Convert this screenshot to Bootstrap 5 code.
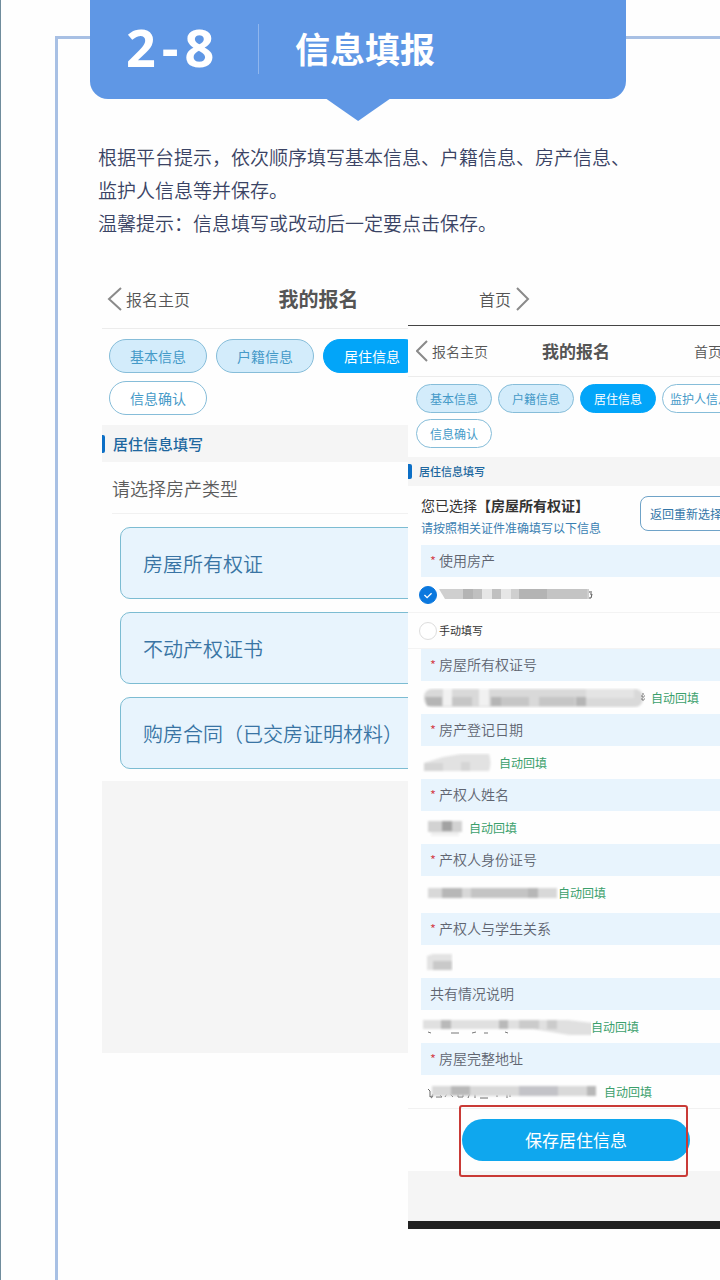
<!DOCTYPE html>
<html lang="zh-CN">
<head>
<meta charset="utf-8">
<meta name="viewport" content="width=device-width, initial-scale=1">
<title>2-8 信息填报</title>
<link href="https://cdn.jsdelivr.net/npm/bootstrap@5.3.0/dist/css/bootstrap.min.css" rel="stylesheet">
<style>
  body { font-family: "Noto Sans CJK SC", sans-serif; background: #fefefe; color: #555; }
  a { color: inherit; text-decoration: none; }
  .sheet { min-height: 100vh; padding: 36px 0 0 54px; border-left: 1px solid #6f8c9c; }
  .frame { min-height: calc(100vh - 36px); border: solid #a8c0e4; border-width: 3px 0 0 3px; }

  .banner { width: 81%; height: 99px; margin: -39px 0 0 32px; background: #5f97e5; color: #fff; border-radius: 0 0 18px 18px; }
  .banner::after { content: ""; position: absolute; top: 98px; left: 50%; width: 66px; height: 23px; margin-left: -33px; background: inherit; clip-path: polygon(0 0, 100% 0, 50% 100%); }
  .banner-no { gap: 6px; width: 168px; padding-left: 36px; font: bold 52px/94px "Open Sans", sans-serif; }
  .banner-rule { width: 1px; height: 50px; margin-top: 24px; background: #8fb6ee; }
  .banner-title { margin: 0 0 0 36px; font-size: 35px; font-weight: 700; line-height: 96px; }

  .intro { margin: 41px 0 31px 40px; font-size: 19px; line-height: 33px; color: #3a4364; font-weight: 350; }

  .shots { grid-template-columns: 1fr; margin-left: 44px; }
  .shots > * { grid-area: 1 / 1; }
  .phone { background: #fefefe; }
  .phone-a { width: 443px; }
  .phone-b { width: 336px; margin: 55px 0 0 306px; border-top: 1px solid #444; z-index: 1; }

  .topbar { grid-template-columns: 1fr auto 1fr; border-bottom: 1px solid #ececec; font-weight: 350; }
  .topbar svg { fill: none; stroke: #8a8a8a; stroke-width: 2; }
  .topbar h2 { margin: 0; font-weight: 700; color: #555; }
  .phone-a .topbar { height: 59px; padding: 0 15px 0 5px; font-size: 16px; }
  .phone-a .topbar h2 { font-size: 20px; }
  .phone-b .topbar { height: 51px; padding: 0 8px; font-size: 14px; }
  .phone-b .topbar h2 { font-size: 17px; }

  .step { padding: 0; border: 1px solid #86bdd9; border-radius: 50rem; color: #459ac8; background: #fff; white-space: nowrap; }
  .step-done { background: #d3ecfb; }
  .step-on, .step-on:hover { background: #02a5f9; border-color: #02a5f9; color: #fff; }
  .phone-a .steps { gap: 8px 9px; padding: 10px 40px 10px 7px; }
  .phone-a .step { width: 98px; height: 34px; font-size: 14px; line-height: 30px; }
  .phone-b .steps { gap: 6px; padding: 7px 0 9px 8px; }
  .phone-b .step { width: 76px; height: 29px; font-size: 12px; line-height: 25px; }

  .section-bar { background: #f5f5f5; color: #20679f; font-weight: 500; margin: 0; }
  .section-bar::before { content: ""; background: #0c6fc6; border-radius: 0 2px 2px 0; }
  .phone-a .section-bar { height: 37px; gap: 8px; font-size: 15px; }
  .phone-a .section-bar::before { width: 3px; height: 18px; }
  .phone-b .section-bar { height: 29px; gap: 7px; font-size: 11px; }
  .phone-b .section-bar::before { width: 4px; height: 15px; }

  .ask { margin: 0 0 0 10px; height: 52px; font-size: 18px; line-height: 52px; color: #5c5c5c; border-bottom: 1px solid #f1f1f1; font-weight: 350; }
  .options { gap: 13px; padding: 13px 0 12px 18px; }
  .option { height: 72px; padding: 2px 22px 0; border: 1px solid #7cbcd2; border-radius: 10px; background: #e8f4fd; color: #3974a4; font-size: 20px; font-weight: 350; text-align: left; }
  .blank { height: 272px; background: #f5f5f5; }

  .chosen { height: 59px; padding: 8px 12px 0 13px; color: #333; }
  .chosen p { margin: 0; font-size: 14px; line-height: 22px; }
  .chosen small { display: block; font-size: 12px; line-height: 24px; color: #3a7fb2; }
  .rechoose { width: 92px; height: 35px; margin-top: 2px; padding: 0; border: 1px solid #6fa3c8; border-radius: 8px; background: #fff; color: #3376a8; font-size: 12px; }
  .field-label { height: 32px; margin: 0 0 0 13px; padding-left: 9px; background: #e8f4fd; color: #5f6470; font-size: 14px; line-height: 31px; font-weight: 350; }
  .req { width: 9px; color: #d23b45; font-size: 13px; }
  .field-value { height: 33px; padding-left: 13px; color: #3ba06c; font-size: 12px; }
  .pick { height: 36px; padding-left: 11px; border-bottom: 1px solid #f3f3f3; font-size: 11px; color: #333; }
  .pick .form-check-input { width: 18px; height: 18px; margin: 0 2px 0 0; border-color: #ddd; flex: none; }
  .pick .form-check-input:checked { border-color: #0b78de; background-color: #0b78de; background-image: url("data:image/svg+xml,%3Csvg xmlns='http://www.w3.org/2000/svg' viewBox='0 0 18 18'%3E%3Cpath d='M5 9l3 3 5-5' fill='none' stroke='%23fff' stroke-width='1.5'/%3E%3C/svg%3E"); }
  .soft { filter: blur(1px); }

  .save-area { padding: 10px 54px; border-top: 1px solid #f1f1f1; }
  .save-btn { height: 42px; padding: 0; border: 0; border-radius: 50rem; background: #0fa7ee; color: #fff; font-size: 17px; }
  .highlight { inset: -14px 2px -16px -3px; border: 2px solid #c93a36; border-radius: 3px; pointer-events: none; }
  .foot { height: 58px; background: #f5f5f5; border-bottom: 8px solid #222; }
</style>
</head>
<body>
<div class="sheet overflow-hidden">
  <main class="frame">
    <header class="banner position-relative d-flex">
      <div class="banner-no d-flex"><span>2</span><span>-</span><span>8</span></div>
      <div class="banner-rule"></div>
      <h1 class="banner-title text-nowrap">信息填报</h1>
    </header>

    <p class="intro">根据平台提示，依次顺序填写基本信息、户籍信息、房产信息、<br>监护人信息等并保存。<br>温馨提示：信息填写或改动后一定要点击保存。</p>

    <div class="shots d-grid align-items-start">
      <section class="phone phone-a">
        <nav class="topbar d-grid align-items-center">
          <a href="#" class="d-flex align-items-center gap-1"><svg width="15" height="26"><path d="M14 2L2 13l12 11"/></svg>报名主页</a>
          <h2>我的报名</h2>
          <a href="#" class="d-flex align-items-center justify-content-end gap-1"><span>首页</span><svg width="15" height="26"><path d="M2 2l11 11L2 24"/></svg></a>
        </nav>
        <div class="steps d-flex flex-wrap">
          <button class="btn step step-done">基本信息</button>
          <button class="btn step step-done">户籍信息</button>
          <button class="btn step step-on">居住信息</button>
          <button class="btn step">信息确认</button>
        </div>
        <h3 class="section-bar d-flex align-items-center">居住信息填写</h3>
        <p class="ask">请选择房产类型</p>
        <div class="options d-grid">
          <button class="option">房屋所有权证</button>
          <button class="option">不动产权证书</button>
          <button class="option">购房合同（已交房证明材料）</button>
        </div>
        <div class="blank"></div>
      </section>

      <section class="phone phone-b">
        <nav class="topbar d-grid align-items-center">
          <a href="#" class="d-flex align-items-center gap-1"><svg width="12" height="22"><path d="M11 1L1 11l10 10"/></svg>报名主页</a>
          <h2>我的报名</h2>
          <a href="#" class="d-flex align-items-center justify-content-end gap-1"><span>首页</span><svg width="10" height="22"><path d="M1 1l9 10-9 10"/></svg></a>
        </nav>
        <div class="steps d-flex flex-wrap">
          <button class="btn step step-done">基本信息</button>
          <button class="btn step step-done">户籍信息</button>
          <button class="btn step step-on">居住信息</button>
          <button class="btn step">监护人信息</button>
          <button class="btn step">信息确认</button>
        </div>
        <h3 class="section-bar d-flex align-items-center">居住信息填写</h3>
        <div class="chosen d-flex justify-content-between align-items-start">
          <div><p>您已选择<b>【房屋所有权证】</b></p><small>请按照相关证件准确填写以下信息</small></div>
          <button class="rechoose">返回重新选择</button>
        </div>

        <div class="field-label d-flex"><span class="req">*</span>使用房产</div>
        <div class="pick d-flex align-items-center">
          <input class="form-check-input" type="radio" name="house" id="house-known" checked>
          <label for="house-known" class="d-flex" aria-label="已登记房产">
            <svg width="156" height="14"><path d="M0 1h150v10H6z" fill="#cfcfcf"/><path d="M24 1h10v10H24zM80 1h28v10H80z" fill="#b4b4b4"/><path d="M34 1h9v10h-9zM53 1h9v10h-9z" fill="#c0c0c0"/><path d="M43 1h10v10H43zM62 1h10v10H62z" fill="#e6e6e6"/><path d="M108 1h40v10h-40z" fill="#c4c4c4"/><path d="M150 4h3m-2 2h2l-1 4h-2" fill="none" stroke="#555"/></svg>
          </label>
        </div>
        <div class="pick d-flex align-items-center">
          <input class="form-check-input" type="radio" name="house" id="house-manual">
          <label for="house-manual">手动填写</label>
        </div>

        <div class="field-label d-flex"><span class="req">*</span>房屋所有权证号</div>
        <div class="field-value d-flex align-items-center">
          <svg width="230" height="20"><g class="soft"><rect x="3" y="1" width="219" height="18" rx="8" fill="#d9d9d9"/><path d="M4 9h17v9H6zM70 9h10v9H70zM155 9h10v9h-10z" fill="#b5b5b5"/><path d="M22 1h9v17h-9zM58 1h10v17H58z" fill="#f1f1f1"/><path d="M31 9h20v9H31zM80 9h28v9H80zM118 9h36v9h-36z" fill="#c6c6c6"/><path d="M165 1h48v9h-48z" fill="#e4e4e4"/></g><path d="M222 5v9m-2-6h4m-4 3h4" fill="none" stroke="#777" stroke-dasharray="2 1"/></svg>自动回填
        </div>
        <div class="field-label d-flex"><span class="req">*</span>房产登记日期</div>
        <div class="field-value d-flex align-items-center">
          <svg width="78" height="20"><g class="soft"><path d="M3 18V10L22 4 40 1h28q3 9 0 17z" fill="#e2e2e2"/><path d="M3 10h19v8H3zM40 9h9v9h-9z" fill="#d5d5d5"/></g></svg>自动回填
        </div>
        <div class="field-label d-flex"><span class="req">*</span>产权人姓名</div>
        <div class="field-value d-flex align-items-center">
          <svg width="48" height="20"><g class="soft"><rect x="7" y="3" width="34" height="11" fill="#d2d2d2"/><rect x="21" y="3" width="10" height="10" fill="#a2a2a2"/><rect x="10" y="14" width="28" height="4" fill="#f0f0f0"/></g></svg>自动回填
        </div>
        <div class="field-label d-flex"><span class="req">*</span>产权人身份证号</div>
        <div class="field-value d-flex align-items-center mb-1">
          <svg width="137" height="20"><g class="soft"><rect x="7" y="5" width="129" height="10" fill="#d8d8d8"/><path d="M21 5h20v10H21zM107 5h10v10h-10z" fill="#b7b7b7"/><path d="M50 5h57v10H50z" fill="#c4c4c4"/></g></svg>自动回填
        </div>
        <div class="field-label d-flex"><span class="req">*</span>产权人与学生关系</div>
        <div class="field-value d-flex align-items-center">
          <svg width="32" height="20"><g class="soft"><path d="M6 4l6-2h19v16H6z" fill="#e3e3e3"/><path d="M12 9h19v9H12z" fill="#c9c9c9"/></g></svg>
        </div>
        <div class="field-label d-flex">共有情况说明</div>
        <div class="field-value d-flex align-items-center">
          <svg width="170" height="20"><g class="soft"><path d="M2 3h145l25 3v12h-24l-36-6H2z" fill="#e0e0e0"/><path d="M20 3h10v9H20zM78 3h9v9h-9z" fill="#b9b9b9"/><path d="M98 3h20v9H98zM126 3h10v9h-10z" fill="#cbcbcb"/></g><path d="M7 15l3 1m20 0h8m13 0l4-1m8 1h4m17-1l3 1" stroke="#777"/></svg>自动回填
        </div>
        <div class="field-label d-flex"><span class="req">*</span>房屋完整地址</div>
        <div class="field-value d-flex align-items-center">
          <svg width="183" height="20"><path d="M7 7l2 2v6l2-1m1-2q0 4-2 4m5-1h6l-2-2m8-3l-3 5m5-3l3 3m5-4v4h5v-3m7-1l-2 5m7-4v4m5 0h8m9-3v2m10-3v4m3-4v3" fill="none" stroke="#666"/><g class="soft"><rect x="11" y="4" width="164" height="10" fill="#d9d9d9"/><path d="M30 4h19v9H30zM166 4h9v10h-9z" fill="#b8b8b8"/><path d="M98 4h39v10H98z" fill="#c3c3c8"/></g></svg>自动回填
        </div>
        <div class="save-area">
          <div class="position-relative">
            <button class="save-btn w-100">保存居住信息</button>
            <div class="highlight position-absolute"></div>
          </div>
        </div>
        <div class="foot"></div>
      </section>
    </div>
  </main>
</div>
<script src="https://cdn.jsdelivr.net/npm/bootstrap@5.3.0/dist/js/bootstrap.bundle.min.js"></script>
</body>
</html>
